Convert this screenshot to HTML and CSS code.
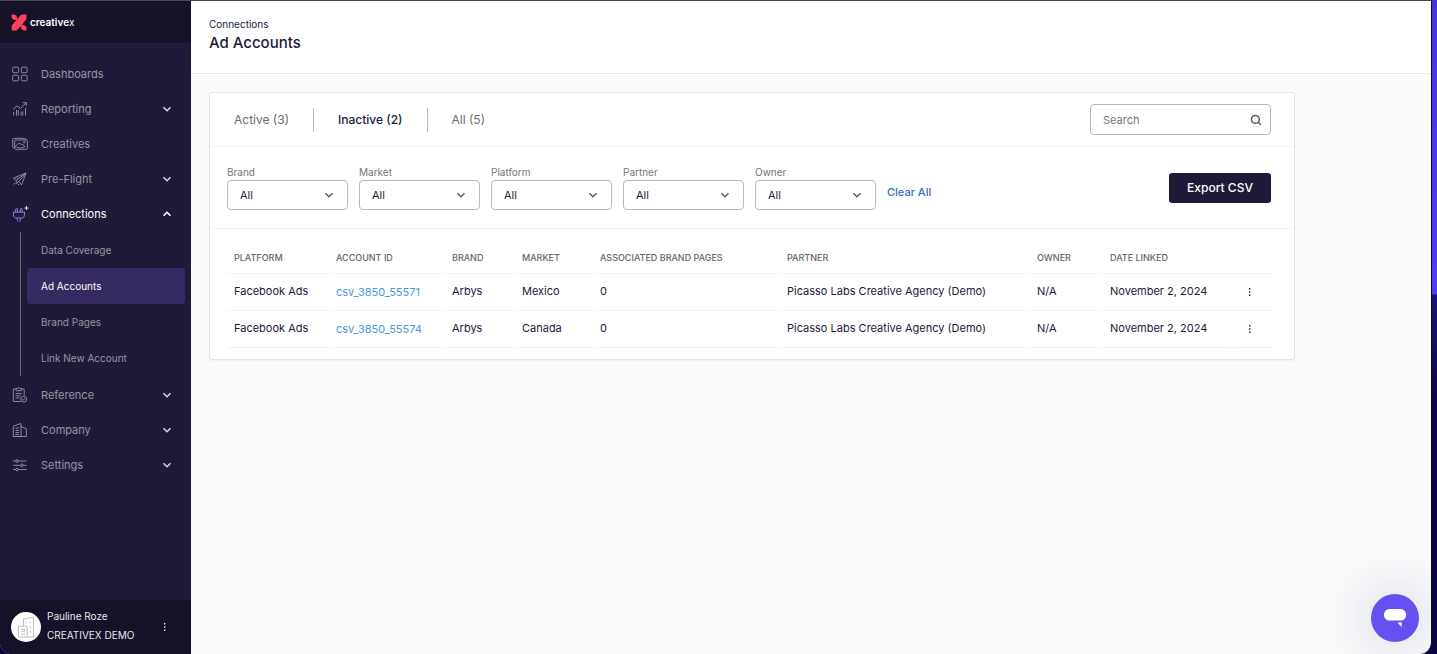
FILE: index.html
```html
<!DOCTYPE html>
<html lang="en">
<head>
<meta charset="utf-8">
<meta name="viewport" content="width=device-width, initial-scale=1">
<title>Ad Accounts</title>
<link rel="stylesheet" href="styles.css">
</head>
<body>
<svg class="defs" aria-hidden="true">
  <symbol id="down" viewBox="0 0 10 10"><path d="M1.5 3.2 5 6.7 8.5 3.2"/></symbol>
  <symbol id="dots" viewBox="0 0 4 10"><path d="M1 1h1.4v1.4H1zM1 4.3h1.4v1.4H1zM1 7.6h1.4V9H1z"/></symbol>
</svg>
<div class="window">
  <aside class="sidebar">
    <div class="brand">
      <svg class="brand-mark" viewBox="0 0 16 17" aria-hidden="true">
        <path d="M11.500.6h4v3.400c0 .7-.3 1.300-.7 1.900L7 15.300c-.6.7-1.300 1.100-2.200 1.100H.6V13c0-.7.2-1.300.7-1.900L9.200 1.700c.6-.7 1.400-1.100 2.300-1.100Z"/>
        <path d="M.6.6h1.900c2 0 3 1 3.400 2.500l.4 1.700c.2.900-.5 1.500-1.400 1.300L3 5.700C1.400 5.300.6 4.300.6 2.500Z"/>
        <path d="M15.500 16.400h-1.900c-2 0-3-1-3.400-2.500l-.4-1.700c-.2-.9.500-1.500 1.400-1.300l1.900.4c1.600.4 2.400 1.400 2.400 3.200Z"/>
      </svg>
      <span class="brand-name">creative<span class="brand-x">x</span></span>
    </div>
    <nav class="nav">
      <a class="nav-item" href="#">
        <svg class="nav-icon" viewBox="0 0 16 16" aria-hidden="true"><rect x=".7" y="1.200" width="5.800" height="5.500" rx="1"/><rect x="9.300" y="1.200" width="5.800" height="5.500" rx="1"/><rect x=".7" y="9.300" width="5.800" height="5.500" rx="1"/><rect x="9.300" y="9.300" width="5.800" height="5.500" rx="1"/></svg>
        <span>Dashboards</span>
      </a>
      <a class="nav-item" href="#">
        <svg class="nav-icon" viewBox="0 0 16 16" aria-hidden="true"><path d="M1 8.500 5 5l3.500 2.300L14 2M10.800 1.600h3.500v3.500M1.700 14.500V11M4.500 14.500V9M6.300 14.500V9M9 14.500v-4M10.800 14.500v-4M13.500 14.500V7"/></svg>
        <span>Reporting</span>
        <svg class="nav-arrow" aria-hidden="true"><use href="#down"/></svg>
      </a>
      <a class="nav-item" href="#">
        <svg class="nav-icon" viewBox="0 0 16 16" aria-hidden="true"><path d="M2.500 11.800H1.700a1 1 0 0 1-1-1V3.400a1 1 0 0 1 1-1h11a1 1 0 0 1 1 1v.6"/><rect x="2.700" y="4" width="12.600" height="9.300" rx="1"/><path d="M3 11.200c2.500-4 5-5 6.500-2.500 1-.5 2.500.3 3 1.800M4.500 11c2 1.200 6 1.200 8.500-.5"/><circle cx="12.200" cy="6.300" r=".7"/></svg>
        <span>Creatives</span>
      </a>
      <a class="nav-item" href="#">
        <svg class="nav-icon" viewBox="0 0 16 16" aria-hidden="true"><path d="M14 2 1.300 7.200l3 2L14 2 9.500 14l-2.700-3.500L14 2M4.300 9.200v3.300l2.500-2M4.800 6.700l2 .8M1.500 13.500l1.700-1.600M6 14l1-1"/></svg>
        <span>Pre-Flight</span>
        <svg class="nav-arrow" aria-hidden="true"><use href="#down"/></svg>
      </a>
      <a class="nav-item nav-item-open" href="#">
        <svg class="nav-icon nav-icon-plug" viewBox="0 0 16 16" aria-hidden="true"><path d="M1 6.200h11.500v1.600M12.500 6.200v2.600c0 2-1.200 3.200-3.200 3.200H4.700c-2 0-3.200-1.200-3.200-3.200V6.200M3.700 6V3.200c0-.9 1.800-.9 1.800 0V6M8.300 6V3.200c0-.9 1.800-.9 1.800 0V6M5 12.200c0 1.800.9 1.800.9 3.300M8.700 12.200c0 1.800-.9 1.800-.9 3.300"/><path class="spark" d="M14.500 0v4M12.500 2h4"/></svg>
        <span>Connections</span>
        <svg class="nav-arrow nav-arrow-up" aria-hidden="true"><use href="#down"/></svg>
      </a>
      <div class="subnav">
        <a class="subnav-item" href="#">Data Coverage</a>
        <a class="subnav-item subnav-item-active" href="#" aria-current="page">Ad Accounts</a>
        <a class="subnav-item" href="#">Brand Pages</a>
        <a class="subnav-item" href="#">Link New Account</a>
      </div>
      <a class="nav-item" href="#">
        <svg class="nav-icon" viewBox="0 0 16 16" aria-hidden="true"><path d="M8.500 14.500H1.300V2H4M9.500 2h2.700v6.500"/><path d="M4 3.700V1.500h1.700c0-1.300 2.100-1.300 2.100 0h1.700v2.200ZM3.500 6.500h6.300M3.500 8.800h5.300M3.500 11h4"/><circle cx="11.700" cy="12.200" r="2.900"/><path d="m10.200 12.200 1.100 1.100 2-2.200"/></svg>
        <span>Reference</span>
        <svg class="nav-arrow" aria-hidden="true"><use href="#down"/></svg>
      </a>
      <a class="nav-item" href="#">
        <svg class="nav-icon" viewBox="0 0 16 16" aria-hidden="true"><path d="M1.300 14.500V4.200L9 1.500v13ZM9 4.500l5.300 2.300v7.700H1.300M3.500 6.500 7 5.700M3.500 8.500H7M3.500 10.500H7M3.500 12.500H7"/></svg>
        <span>Company</span>
        <svg class="nav-arrow" aria-hidden="true"><use href="#down"/></svg>
      </a>
      <a class="nav-item" href="#">
        <svg class="nav-icon" viewBox="0 0 16 16" aria-hidden="true"><path d="M1 4h2.600M6.400 4h8.100M1 8.300h7.600M11.400 8.300h3.100M1 12.500h2.600M6.400 12.500h8.100"/><circle cx="5" cy="4" r="1.300"/><circle cx="10" cy="8.300" r="1.300"/><circle cx="5" cy="12.500" r="1.300"/></svg>
        <span>Settings</span>
        <svg class="nav-arrow" aria-hidden="true"><use href="#down"/></svg>
      </a>
    </nav>
    <div class="user">
      <svg class="avatar" viewBox="0 0 30 30" aria-hidden="true"><circle cx="15" cy="15" r="15"/><path d="M12.500 14V7l10-2v20H7.500V14.200h8.800V25M10 17.300h4M10 19.300h4v-2M10 22.200h4M15.300 9.500v2M19 9v2M19.300 14v2M19.300 18.500v2"/></svg>
      <div class="user-text">
        <span>Pauline Roze</span>
        <span>CREATIVEX DEMO</span>
      </div>
      <button class="menu-button user-menu" type="button" aria-label="User menu"><svg class="dots" aria-hidden="true"><use href="#dots"/></svg></button>
    </div>
  </aside>
  <div class="page">
    <header class="page-header">
      <span class="crumb">Connections</span>
      <h1 class="title">Ad Accounts</h1>
    </header>
    <main class="content">
      <section class="card">
        <div class="tabs-row">
          <div class="tabs">
            <button class="tab" type="button">Active (3)</button>
            <button class="tab tab-active" type="button">Inactive (2)</button>
            <button class="tab" type="button">All (5)</button>
          </div>
          <div class="search">
            <input class="search-input" type="search" placeholder="Search" aria-label="Search">
            <svg class="search-icon" viewBox="0 0 12 12" aria-hidden="true"><circle cx="5.400" cy="5.400" r="3.900"/><path d="m8.300 8.300 2.500 2.500"/></svg>
          </div>
        </div>
        <div class="filters">
          <div class="filter"><label class="filter-label" for="brand">Brand</label><select class="select" id="brand"><option>All</option></select><svg class="select-arrow" aria-hidden="true"><use href="#down"/></svg></div>
          <div class="filter"><label class="filter-label" for="market">Market</label><select class="select" id="market"><option>All</option></select><svg class="select-arrow" aria-hidden="true"><use href="#down"/></svg></div>
          <div class="filter"><label class="filter-label" for="platform">Platform</label><select class="select" id="platform"><option>All</option></select><svg class="select-arrow" aria-hidden="true"><use href="#down"/></svg></div>
          <div class="filter"><label class="filter-label" for="partner">Partner</label><select class="select" id="partner"><option>All</option></select><svg class="select-arrow" aria-hidden="true"><use href="#down"/></svg></div>
          <div class="filter"><label class="filter-label" for="owner">Owner</label><select class="select" id="owner"><option>All</option></select><svg class="select-arrow" aria-hidden="true"><use href="#down"/></svg></div>
          <button class="clear" type="button">Clear All</button>
          <button class="export" type="button">Export CSV</button>
        </div>
        <div class="table-wrap">
          <table class="table">
            <colgroup><col class="c-platform"><col class="c-account"><col class="c-brand"><col class="c-market"><col class="c-pages"><col class="c-partner"><col class="c-owner"><col class="c-date"><col class="c-menu"></colgroup>
            <thead>
              <tr><th>PLATFORM</th><th>ACCOUNT ID</th><th>BRAND</th><th>MARKET</th><th>ASSOCIATED BRAND PAGES</th><th>PARTNER</th><th>OWNER</th><th>DATE LINKED</th><th></th></tr>
            </thead>
            <tbody>
              <tr><td>Facebook Ads</td><td class="linked"><a class="account" href="#">csv_3850_55571</a></td><td>Arbys</td><td>Mexico</td><td>0</td><td>Picasso Labs Creative Agency (Demo)</td><td>N/A</td><td>November 2, 2024</td><td class="linked"><button class="menu-button" type="button" aria-label="Row menu"><svg class="dots" aria-hidden="true"><use href="#dots"/></svg></button></td></tr>
              <tr><td>Facebook Ads</td><td class="linked"><a class="account" href="#">csv_3850_55574</a></td><td>Arbys</td><td>Canada</td><td>0</td><td>Picasso Labs Creative Agency (Demo)</td><td>N/A</td><td>November 2, 2024</td><td class="linked"><button class="menu-button" type="button" aria-label="Row menu"><svg class="dots" aria-hidden="true"><use href="#dots"/></svg></button></td></tr>
            </tbody>
          </table>
        </div>
      </section>
    </main>
    <button class="chat" type="button" aria-label="Open chat"><svg class="chat-icon" viewBox="0 0 24 20" aria-hidden="true"><rect x=".8" y="1" width="22.400" height="11.600" rx="5.800"/><path d="M14.500 14.600h4.200v4.600Z"/></svg></button>
  </div>
</div>
</body>
</html>
```

FILE: styles.css
```css
* { box-sizing: border-box; }

body {
  margin: 0;
  min-height: 100vh;
  display: flex;
  padding-right: 5px;
  background: linear-gradient(#4636dc, #503cfb 294px, #1b1577 295px, #0d0648 60%, #0a0440);
  font-family: Inter, "Liberation Sans", sans-serif;
  font-size: 11px;
  color: #201a39;
}

button, input, select { font: inherit; color: inherit; }
button { border: 0; padding: 0; background: none; cursor: pointer; }
a { text-decoration: none; }
svg { fill: none; stroke: currentColor; flex: none; }
.defs { position: absolute; width: 0; height: 0; }

.window {
  flex: 1;
  display: flex;
  border-top: 1px solid #3f4a4b;
  border-right: 1px solid #08071c;
  border-radius: 0 0 12px 12px;
  overflow: hidden;
  background: #fafafc;
}

/* Sidebar */
.sidebar {
  width: 191px;
  flex: none;
  display: flex;
  flex-direction: column;
  background: #201a39;
  color: #98959f;
}
.brand {
  height: 42px;
  padding-left: 11px;
  display: flex;
  align-items: center;
  gap: 3px;
  background: #151126;
  color: #fff;
}
.brand-mark { width: 16px; height: 17px; fill: #ff4259; stroke: none; }
.brand-name { font-size: 10px; line-height: 12px; font-weight: 600; }
.brand-x { font-weight: 400; }

.nav { flex: 1; padding-top: 13px; }
.nav-item {
  height: 35px;
  padding: 0 19px 0 12px;
  display: flex;
  align-items: center;
  gap: 13px;
  color: inherit;
}
.nav-item-open { color: #fff; }
.nav-icon { width: 16px; height: 16px; stroke-width: 0.9; overflow: visible; }
.nav-icon-plug { color: #9a8df0; }
.spark { stroke: #fff; }
.nav-arrow { width: 10px; height: 10px; margin-left: auto; color: #d3d1da; stroke-width: 1.6; }
.nav-arrow-up { transform: rotate(180deg); color: #fff; }

.subnav {
  margin: 1px 0 1px 20px;
  padding: 0 6px;
  border-left: 1px solid #6b6778;
}
.subnav-item {
  height: 36px;
  padding-left: 14px;
  display: flex;
  align-items: center;
  border-radius: 4px;
  color: inherit;
  font-size: 10px;
}
.subnav-item-active { background: #362a63; color: #fff; }

.user {
  height: 54px;
  padding: 0 24px 0 11px;
  display: flex;
  align-items: center;
  gap: 6px;
  background: #151126;
  color: #e8e7ec;
  font-size: 10px;
}
.avatar { width: 30px; height: 30px; stroke: #b9b9bc; stroke-width: 0.9; }
.avatar circle { fill: #fff; stroke: none; }
.user-text { display: flex; flex-direction: column; gap: 7px; padding-bottom: 3px; line-height: 12px; }
.user-menu { margin-left: auto; }

.menu-button { display: flex; }
.dots { width: 4px; height: 10px; fill: currentColor; stroke: none; }

/* Page */
.page { flex: 1; min-width: 0; position: relative; display: flex; flex-direction: column; }
.page-header {
  height: 73px;
  padding: 17px 18px 0;
  background: #fff;
  border-bottom: 1px solid #e6e6ea;
}
.crumb { display: block; font-size: 10px; line-height: 13px; }
.title { margin: 2px 0 0; font-size: 15px; line-height: 20px; font-weight: 500; }
.content { padding: 18px; }

.card {
  max-width: 1086px;
  background: #fff;
  border: 1px solid #e5e5e9;
  border-radius: 3px;
  box-shadow: 0 1px 2px #0000000a;
}
.tabs-row {
  height: 54px;
  padding: 0 23px 0 24px;
  display: flex;
  align-items: center;
  justify-content: space-between;
  border-bottom: 1px solid #f3f3f5;
}
.tabs { display: flex; }
.tab {
  height: 24px;
  padding: 0 24px;
  border-left: 1px solid #b8b8bc;
  color: #6a6a70;
  font-size: 12px;
}
.tab:first-child { padding-left: 0; border-left: 0; }
.tab-active { color: #201a39; font-weight: 500; }

.search { position: relative; width: 181px; }
.search-input {
  width: 100%;
  height: 31px;
  padding: 0 30px 0 12px;
  border: 1px solid #b8b8bc;
  border-radius: 4px;
  background: #fff;
  appearance: none;
}
.search-input::placeholder { color: #75757a; opacity: 1; }
.search-icon {
  position: absolute;
  top: 10px;
  right: 9px;
  width: 12px;
  height: 12px;
  color: #5b5b60;
  stroke-width: 1.5;
}

.filters {
  padding: 18px 23px 18px 17px;
  display: flex;
  align-items: center;
  gap: 11px;
  border-bottom: 1px solid #f3f3f5;
}
.filter { position: relative; width: 121px; }
.filter-label { display: block; font-size: 10px; line-height: 15px; color: #75757a; }
.select {
  display: block;
  width: 100%;
  height: 30px;
  padding: 0 12px;
  border: 1px solid #b8b8bc;
  border-radius: 4px;
  background: #fff;
  appearance: none;
}
.select-arrow {
  position: absolute;
  right: 14px;
  bottom: 10px;
  width: 10px;
  height: 10px;
  color: #5b5b60;
  stroke-width: 1.5;
  pointer-events: none;
}
.clear { padding-top: 8px; color: #2c6fc4; font-weight: 500; }
.export {
  width: 102px;
  height: 30px;
  margin-left: auto;
  border-radius: 3px;
  background: #201a39;
  color: #fff;
  font-size: 12px;
  font-weight: 500;
}

.table-wrap { padding: 12px 17px 11px 16px; }
.table {
  width: 100%;
  table-layout: fixed;
  border-collapse: separate;
  border-spacing: 2px 0;
}
.table th, .table td {
  padding: 0 0 0 6px;
  border-bottom: 1px solid #f3f3f5;
  text-align: left;
  white-space: nowrap;
}
.table th { height: 33px; font-size: 9px; font-weight: 500; color: #66666b; }
.table td { height: 37px; padding-bottom: 3px; }
.table .linked { padding-bottom: 0; }
.table .menu-button { margin-left: 9px; }
.account { color: #4598dc; }
.c-platform { width: 100px; }
.c-account { width: 114px; }
.c-brand { width: 68px; }
.c-market { width: 76px; }
.c-pages { width: 185px; }
.c-partner { width: 248px; }
.c-owner { width: 71px; }
.c-date { width: 127px; }
.c-menu { width: 42px; }

.chat {
  position: absolute;
  right: 12px;
  bottom: 12px;
  width: 48px;
  height: 48px;
  display: flex;
  align-items: center;
  justify-content: center;
  border-radius: 50%;
  background: #6650f0;
  box-shadow: 0 0 48px 12px #1c324a1c;
}
.chat-icon { width: 24px; height: 20px; fill: #fff; stroke: none; }
```
